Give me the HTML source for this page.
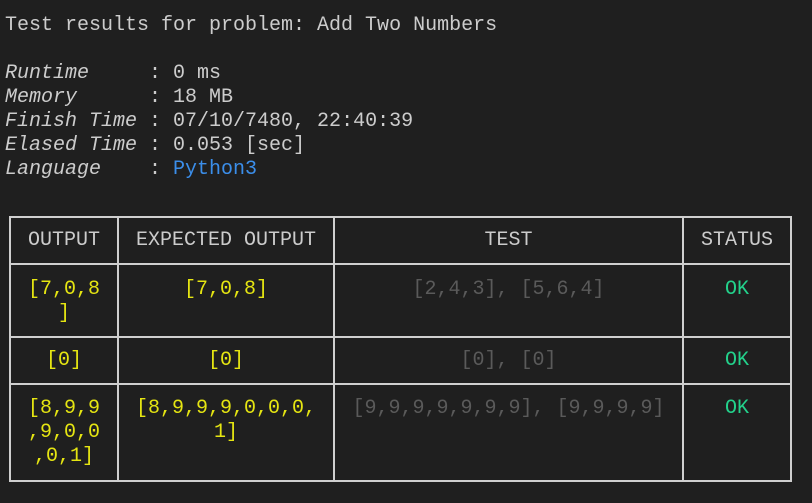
<!DOCTYPE html>
<html><head><style>
body{margin:0;background:#1f1f1f;width:812px;height:503px;overflow:hidden;font-family:"Liberation Mono",monospace;font-size:20px;color:#cccccc;position:relative}
.l{position:absolute;left:5px;white-space:pre;line-height:24px}
i{font-style:italic}
.v{position:absolute;background:#cfcfcf;width:2px;top:216px;height:266px}
.h{position:absolute;background:#cfcfcf;height:2px;left:9px;width:783px}
.c{position:absolute;text-align:center;line-height:24px;white-space:pre}
.y{color:#e5e512}.g{color:#5a5a5a}.k{color:#23d18b}
</style></head><body>
<div class="l" style="top:14px">Test results for problem: Add Two Numbers</div>
<div class="l" style="top:62px"><i>Runtime     </i>: 0 ms
<i>Memory      </i>: 18 MB
<i>Finish Time </i>: 07/10/7480, 22:40:39
<i>Elased Time </i>: 0.053 [sec]
<i>Language    </i>: <span style="color:#3b8eea">Python3</span></div>
<div class="v" style="left:9px"></div>
<div class="v" style="left:117px"></div>
<div class="v" style="left:333px"></div>
<div class="v" style="left:682px"></div>
<div class="v" style="left:790px"></div>
<div class="h" style="top:216px"></div>
<div class="h" style="top:263px"></div>
<div class="h" style="top:336px"></div>
<div class="h" style="top:383px"></div>
<div class="h" style="top:480px"></div>

<div class="c" style="left:11px;width:106px;top:229px">OUTPUT</div>
<div class="c" style="left:119px;width:214px;top:229px">EXPECTED OUTPUT</div>
<div class="c" style="left:335px;width:347px;top:229px">TEST</div>
<div class="c" style="left:684px;width:106px;top:229px">STATUS</div>

<div class="c y" style="left:11px;width:106px;top:278px">[7,0,8
]</div>
<div class="c y" style="left:119px;width:214px;top:278px">[7,0,8]</div>
<div class="c g" style="left:335px;width:347px;top:278px">[2,4,3], [5,6,4]</div>
<div class="c k" style="left:684px;width:106px;top:278px">OK</div>

<div class="c y" style="left:11px;width:106px;top:349px">[0]</div>
<div class="c y" style="left:119px;width:214px;top:349px">[0]</div>
<div class="c g" style="left:335px;width:347px;top:349px">[0], [0]</div>
<div class="c k" style="left:684px;width:106px;top:349px">OK</div>

<div class="c y" style="left:11px;width:106px;top:397px">[8,9,9
,9,0,0
,0,1]</div>
<div class="c y" style="left:119px;width:214px;top:397px">[8,9,9,9,0,0,0,
1]</div>
<div class="c g" style="left:335px;width:347px;top:397px">[9,9,9,9,9,9,9], [9,9,9,9]</div>
<div class="c k" style="left:684px;width:106px;top:397px">OK</div>
</body></html>
